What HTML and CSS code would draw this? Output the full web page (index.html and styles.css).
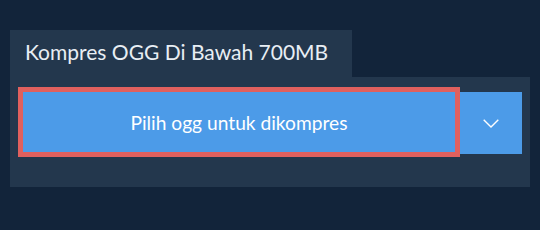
FILE: index.html
```html
<!DOCTYPE html>
<html lang="id">
<head>
    <meta charset="UTF-8">
    <meta name="viewport" content="width=device-width, initial-scale=1.0">
    <title>Kompres OGG</title>
    <link rel="stylesheet" href="styles.css">
</head>
<body>
    <div class="wrapper">
        <div class="tab">Kompres OGG Di Bawah 700MB</div>

        <div class="panel">
            <div class="upload-row">
                <button class="pick-btn">Pilih ogg untuk dikompres</button>
                <button class="more-btn" aria-label="Opsi lain">
                    <svg width="16" height="9" viewBox="0 0 16 9">
                        <path d="M0.7 0.7 L8 8 L15.3 0.7" fill="none" stroke="#fff" stroke-width="1.4"/>
                    </svg>
                </button>
            </div>
        </div>
    </div>
</body>
</html>
```

FILE: styles.css
```css
* {
    margin: 0;
    padding: 0;
    box-sizing: border-box;
    font-family: 'Lato', 'Open Sans', sans-serif;
}

body {
    background: #12243a;
    width: 540px;
    height: 230px;
    overflow: hidden;
}

.wrapper {
    padding: 30px 10px 0 10px;
}

.tab {
    display: inline-block;
    width: 342px;
    height: 47px;
    padding: 7px 0 0 15px;
    background: #23374d;
    color: #e8eef4;
    font-size: 21px;
    line-height: 30px;
}

.panel {
    width: 520px;
    height: 110px;
    padding: 10px 8px;
    background: #23374d;
}

.upload-row {
    display: flex;
    align-items: flex-start;
}

.pick-btn {
    width: 442px;
    height: 70px;
    border: 5px solid #e0605e;
    background: #4c9be8;
    color: #fff;
    font-size: 19.2px;
    cursor: pointer;
}

.more-btn {
    width: 62px;
    height: 62px;
    margin-top: 5px;
    border: none;
    background: #4c9be8;
    display: flex;
    align-items: center;
    justify-content: center;
    cursor: pointer;
}
```
